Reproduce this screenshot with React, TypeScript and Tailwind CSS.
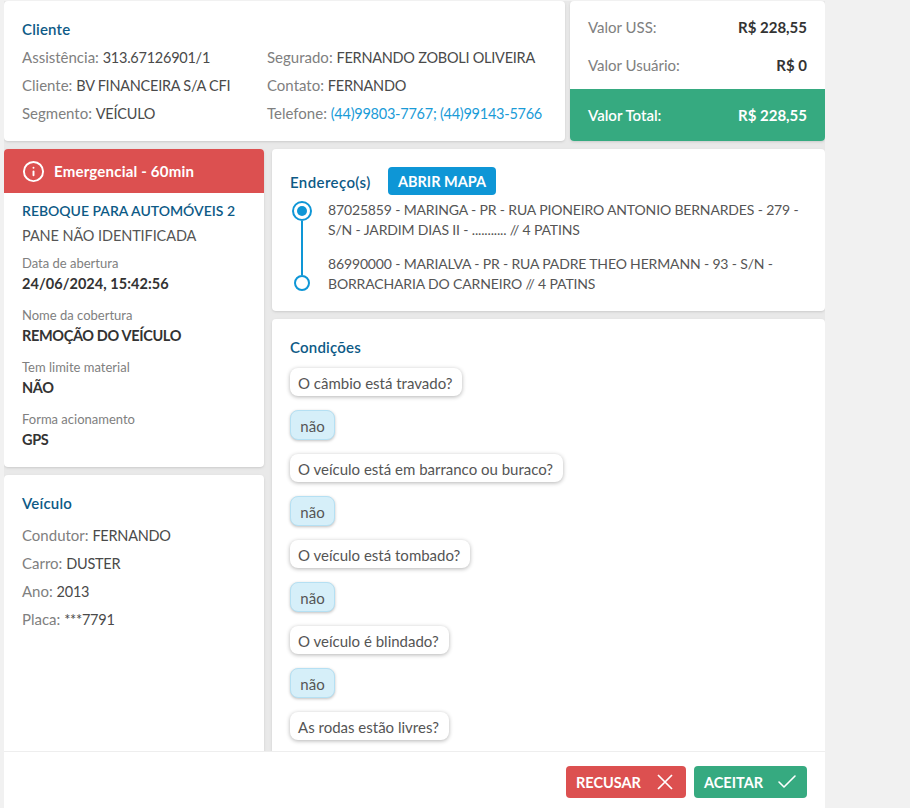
import React, { FC } from "react";
import { Info as InfoIcon, Check } from "lucide-react";

const font = "font-['Lato','Noto_Sans',sans-serif]";

const Info: FC<{ label: string; value: string; link?: boolean }> = ({ label, value, link }) => (
  <div className="h-[28px] leading-[28px] text-[15px] whitespace-nowrap">
    <span className="text-[#808080]">{label}: </span>
    <span className={link ? "text-[14.5px] tracking-[-0.25px] text-[#1a9bd7]" : "text-[14.5px] tracking-[-0.25px] text-[#4a4a4a]"}>{value}</span>
  </div>
);

const Field: FC<{ label: string; value: string; digits?: boolean }> = ({ label, value, digits }) => (
  <div className="mt-[10px]">
    <div className="text-[13px] leading-[20px] text-[#808080]">{label}</div>
    <div className={digits ? "text-[14.5px] tracking-[0.05px] leading-[22px] font-bold text-[#333333]" : "text-[14.5px] tracking-[-0.35px] leading-[22px] font-bold text-[#333333]"}>{value}</div>
  </div>
);

const conditions = [
  "O câmbio está travado?",
  "O veículo está em barranco ou buraco?",
  "O veículo está tombado?",
  "O veículo é blindado?",
  "As rodas estão livres?",
];

const App: FC = () => {
  return (
    <div className={`${font} w-[910px] h-[808px] bg-[#f1f1f1] overflow-hidden`}>
      <div className="w-[821px] h-full ml-1 pt-px flex flex-col">
        <div className="flex-1 min-h-0 overflow-hidden bg-[#e9e9e9] flex flex-col gap-2">
          <div className="flex gap-[5px] shrink-0">
            <section className="w-[561px] h-[140px] bg-white rounded shadow-sm px-[18px] pt-[18px]">
              <h2 className="text-[15px] tracking-[0.2px] leading-[20px] font-semibold text-[#0d5a86] mb-[4px]">Cliente</h2>
              <div className="flex">
                <div className="w-[245px] shrink-0">
                  <Info label="Assistência" value="313.67126901/1" />
                  <Info label="Cliente" value="BV FINANCEIRA S/A CFI" />
                  <Info label="Segmento" value="VEÍCULO" />
                </div>
                <div>
                  <Info label="Segurado" value="FERNANDO ZOBOLI OLIVEIRA" />
                  <Info label="Contato" value="FERNANDO" />
                  <Info label="Telefone" value="(44)99803-7767; (44)99143-5766" link />
                </div>
              </div>
            </section>
            <section className="w-[255px] h-[140px] bg-white rounded shadow-sm overflow-hidden flex flex-col text-[15px]">
              <div className="flex-1 px-[18px] pt-[7px]">
                <div className="flex justify-between h-[38px] items-center">
                  <span className="text-[#808080]">Valor USS:</span>
                  <span className="font-bold text-[#333333]">R$ 228,55</span>
                </div>
                <div className="flex justify-between h-[38px] items-center">
                  <span className="text-[#808080]">Valor Usuário:</span>
                  <span className="font-bold text-[#333333]">R$ 0</span>
                </div>
              </div>
              <div className="h-[52px] bg-[#36aa80] text-white px-[18px] flex justify-between items-center">
                <span className="font-semibold">Valor Total:</span>
                <span className="font-bold">R$ 228,55</span>
              </div>
            </section>
          </div>

          <div className="flex-1 min-h-0 flex gap-2">
            <div className="w-[260px] shrink-0 flex flex-col gap-2">
              <section className="h-[318px] bg-white rounded shadow-sm overflow-hidden">
                <div className="h-[44px] bg-[#dc5050] text-white flex items-center gap-[9px] pl-[18px]">
                  <InfoIcon size={23} strokeWidth={2} />
                  <span className="text-[15px] tracking-[0.2px] font-bold">Emergencial - 60min</span>
                </div>
                <div className="px-[18px] pt-[7px]">
                  <div className="text-[14px] leading-[22px] font-semibold text-[#0d5a86] whitespace-nowrap">REBOQUE PARA AUTOMÓVEIS 2</div>
                  <div className="text-[14.5px] tracking-[-0.1px] leading-[28px] text-[#555555]">PANE NÃO IDENTIFICADA</div>
                  <div className="-mt-[7px]">
                    <Field label="Data de abertura" value="24/06/2024, 15:42:56" digits />
                    <Field label="Nome da cobertura" value="REMOÇÃO DO VEÍCULO" />
                    <Field label="Tem limite material" value="NÃO" />
                    <Field label="Forma acionamento" value="GPS" />
                  </div>
                </div>
              </section>
              <section className="flex-1 bg-white rounded-t shadow-sm px-[18px] pt-[18px]">
                <h2 className="text-[15px] tracking-[0.2px] leading-[20px] font-semibold text-[#0d5a86] mb-[8px]">Veículo</h2>
                <Info label="Condutor" value="FERNANDO" />
                <Info label="Carro" value="DUSTER" />
                <Info label="Ano" value="2013" />
                <Info label="Placa" value="***7791" />
              </section>
            </div>

            <div className="w-[553px] shrink-0 flex flex-col gap-2">
              <section className="h-[162px] bg-white rounded shadow-sm px-[18px] pt-[18px]">
                <div className="flex items-center">
                  <h2 className="w-[98px] text-[15px] tracking-[0.4px] leading-[26px] pt-[2px] font-semibold text-[#0d5a86]">Endereço(s)</h2>
                  <span className="h-[28px] w-[108px] pt-px justify-center bg-[#0e96d6] rounded text-white text-[14.5px] font-bold flex items-center">ABRIR MAPA</span>
                </div>
                <div className="flex mt-[5px]">
                  <div className="w-[20px] ml-[2px] mr-[16px] flex flex-col items-center pt-[1px]">
                    <div className="w-[20px] h-[20px] rounded-full border-2 border-[#0e96d6] flex items-center justify-center shrink-0">
                      <div className="w-[10px] h-[10px] rounded-full bg-[#0e96d6]" />
                    </div>
                    <div className="w-[2px] h-[54px] bg-[#0e96d6]" />
                    <div className="w-[16px] h-[16px] rounded-full border-2 border-[#0e96d6] shrink-0" />
                  </div>
                  <div className="text-[14px] tracking-[-0.15px] leading-[20px] text-[#555555] flex-1">
                    <p>87025859 - MARINGA - PR - RUA PIONEIRO ANTONIO BERNARDES - 279 - S/N - JARDIM DIAS II - ........... // 4 PATINS</p>
                    <p className="mt-[14px]">86990000 - MARIALVA - PR - RUA PADRE THEO HERMANN - 93 - S/N - BORRACHARIA DO CARNEIRO // 4 PATINS</p>
                  </div>
                </div>
              </section>
              <section className="flex-1 min-h-0 overflow-hidden bg-white rounded-t shadow-sm px-[18px] pt-[18px]">
                <h2 className="text-[15px] tracking-[0.2px] leading-[20px] font-semibold text-[#0d5a86] mb-[11px]">Condições</h2>
                <div className="flex flex-col items-start gap-[14px]">
                  {conditions.map((text, index) => (
                    <React.Fragment key={index}>
                      <div className="h-[28px] pl-2 pr-[10px] pt-[2px] flex items-center bg-white rounded-lg text-[15px] text-[#555555] shadow-[0_1px_4px_rgba(0,0,0,0.3)]">{text}</div>
                      {index < conditions.length - 1 && (
                        <div className="h-[30px] w-[45px] pt-[2px] justify-center flex items-center bg-[#d6eff9] border border-[#b5e0f3] rounded-lg text-[15px] text-[#555555] shadow-[0_1px_3px_rgba(0,0,0,0.25)]">não</div>
                      )}
                    </React.Fragment>
                  ))}
                </div>
              </section>
            </div>
          </div>
        </div>
        <footer className="relative h-[57px] shrink-0 bg-white border-t border-[#eeeeee] flex items-start justify-end gap-2 pr-[18px] pt-[14px]">
          <button className="h-[32px] w-[120px] pl-[10px] bg-[#dc5050] rounded text-white text-[14.5px] font-bold flex items-center">
            <span className="w-[81px] pt-[2px] text-left">RECUSAR</span>
            <svg width="16" height="16" viewBox="0 0 16 16" fill="none" stroke="currentColor" strokeWidth="1.7">
              <path d="M1 1L15 15M15 1L1 15" />
            </svg>
          </button>
          <button className="h-[32px] w-[113px] pl-[10px] bg-[#36aa80] rounded text-white text-[14.5px] font-bold flex items-center">
            <span className="w-[71px] pt-[2px] text-left">ACEITAR</span>
            <Check size={24} strokeWidth={1.6} />
          </button>
        </footer>
      </div>
    </div>
  );
};

export default App;
